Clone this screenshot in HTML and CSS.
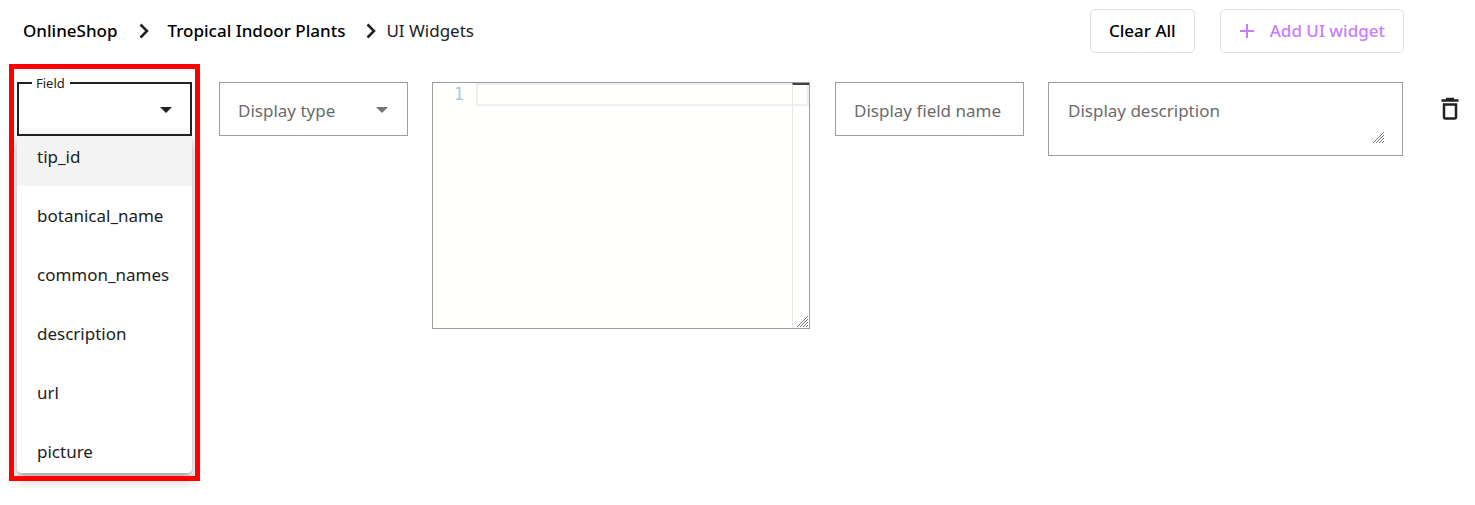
FILE: index.html
```
<!DOCTYPE html>
<html lang="en">
<head>
  <meta charset="UTF-8">
  <title>UI Widgets</title>
  <meta name="viewport" content="width=device-width, initial-scale=1.0">
  <link rel="stylesheet" href="styles.css">
</head>
<body>

  <header class="toolbar">
    <nav class="breadcrumb" aria-label="Breadcrumb">
      <a href="#shop">OnlineShop</a>
      <svg class="chevron" viewBox="0 0 10 16"><path d="M1.5 1.5 8 8l-6.5 6.5"/></svg>
      <a href="#plants">Tropical Indoor Plants</a>
      <svg class="chevron last" viewBox="0 0 10 16"><path d="M1.5 1.5 8 8l-6.5 6.5"/></svg>
      <span>UI Widgets</span>
    </nav>
    <div class="buttons">
      <button type="button" class="btn">Clear All</button>
      <button type="button" class="btn btn-add">
        <svg class="plus" viewBox="0 0 16 16"><path d="M8 1v14M1 8h14"/></svg>
        Add UI widget
      </button>
    </div>
  </header>

  <form class="widget-row">
    <div class="field-cell">
      <div class="select-box active">
        <label for="field">Field</label>
        <select id="field"><option value=""></option></select>
        <svg class="arrow" viewBox="0 0 12 6"><path d="M0 0h12L6 6z"/></svg>
      </div>
      <div class="menu" role="listbox" aria-label="Field">
        <button type="button" class="option selected" role="option" aria-selected="true">tip_id</button>
        <button type="button" class="option" role="option">botanical_name</button>
        <button type="button" class="option" role="option">common_names</button>
        <button type="button" class="option" role="option">description</button>
        <button type="button" class="option" role="option">url</button>
        <button type="button" class="option" role="option">picture</button>
      </div>
      <div class="highlight"></div>
    </div>

    <div class="select-box">
      <select id="type" aria-label="Display type"><option>Display type</option></select>
      <svg class="arrow" viewBox="0 0 12 6"><path d="M0 0h12L6 6z"/></svg>
    </div>

    <div class="editor">
      <div class="gutter">1</div>
      <textarea class="code" rows="1" aria-label="Widget parameters" spellcheck="false"></textarea>
      <div class="ruler"></div>
      <svg class="grip" viewBox="0 0 11 11"><path d="M0 11 11 0M3 11l8-8M6 11l5-5M9 11l2-2"/></svg>
    </div>

    <input class="text-box" type="text" aria-label="Display field name" placeholder="Display field name">

    <div class="area-box">
      <textarea rows="2" aria-label="Display description" placeholder="Display description"></textarea>
      <svg class="grip" viewBox="0 0 11 11"><path d="M0 11 11 0M3 11l8-8M6 11l5-5M9 11l2-2"/></svg>
    </div>

    <button type="button" class="delete" aria-label="Delete widget">
      <svg viewBox="0 0 18 24"><path d="M.5 3.5h17M5 2h8"/><path d="M3 7.500h12V20a1.500 1.500 0 0 1-1.500 1.500h-9A1.500 1.500 0 0 1 3 20z"/></svg>
    </button>
  </form>

</body>
</html>
```
FILE: styles.css
```
* {
  box-sizing: border-box;
}
body {
  margin: 0;
  font-family: "Noto Sans", sans-serif;
  font-size: 17px;
  line-height: 24px;
  color: #212121;
  background: #fff;
}
button, input, select, textarea {
  font: inherit;
  color: inherit;
}

.toolbar {
  display: flex;
  justify-content: space-between;
  align-items: center;
  padding: 9px 71px 0 23px;
}
.breadcrumb {
  display: flex;
  align-items: center;
}
.breadcrumb a {
  color: #000;
  font-weight: 500;
  text-decoration: none;
}
.chevron {
  width: 10px;
  height: 16px;
  margin: 0 19px 0 21px;
  fill: none;
  stroke: #212121;
  stroke-width: 2.5;
}
.chevron.last {
  margin-right: 10px;
}
.buttons {
  display: flex;
  gap: 25px;
}
.btn {
  display: flex;
  align-items: center;
  height: 44px;
  padding: 0 18px;
  color: #000;
  font-weight: 500;
  background: #fff;
  border: 1px solid #e0e0e0;
  border-radius: 5px;
}
.btn-add {
  gap: 15px;
  color: #c77dff;
}
.plus {
  width: 16px;
  height: 16px;
  stroke: #c77dff;
  stroke-width: 2;
}

.widget-row {
  display: grid;
  grid-template-columns: 178fr 189fr 379fr 189fr 355fr 46px;
  gap: 24px;
  align-items: start;
  padding: 29px 2px 32px 17px;
}
.field-cell {
  position: relative;
  margin-right: 3px;
}
.select-box {
  position: relative;
  height: 54px;
  border: 1px solid #9e9e9e;
}
.select-box select {
  width: 100%;
  height: 100%;
  padding: 4px 18px 0;
  color: #6b6b6b;
  background: none;
  border: 0;
  outline: 0;
  appearance: none;
}
.select-box.active {
  border: 2px solid #212121;
}
.select-box label {
  position: absolute;
  top: -11px;
  left: 13px;
  padding: 0 5px 0 4px;
  font-size: 13px;
  line-height: 20px;
  background: #fff;
}
.arrow {
  position: absolute;
  top: 24px;
  right: 19px;
  width: 12px;
  height: 6px;
  fill: #757575;
}
.active .arrow {
  right: 18px;
  top: 23px;
  fill: #212121;
}

.menu {
  height: 337px;
  overflow: hidden;
  background: #fff;
  border-radius: 0 0 5px 5px;
  box-shadow: 0 5px 5px -3px rgba(0, 0, 0, 0.2), 0 8px 10px 1px rgba(0, 0, 0, 0.14), 0 3px 14px 2px rgba(0, 0, 0, 0.12);
}
.option {
  display: block;
  width: 100%;
  height: 59px;
  padding: 0 20px;
  text-align: left;
  background: #fff;
  border: 0;
}
/* list is scrolled a little, the first option sits under the field */
.option.selected {
  margin-top: -9px;
  background: #f4f4f4;
}
.highlight {
  position: absolute;
  inset: -18px -8px -8px -8px;
  border: 5px solid #f00;
  pointer-events: none;
}

.editor {
  position: relative;
  display: flex;
  align-items: flex-start;
  height: 247px;
  margin-right: 1px;
  background: #fffffe;
  border: 1px solid #9e9e9e;
}
.gutter {
  width: 43px;
  padding-right: 12px;
  font-family: "DejaVu Sans Mono", monospace;
  line-height: 22px;
  text-align: right;
  color: #a9cdd6;
}
.code {
  flex: 1;
  min-width: 0;
  height: 23px;
  padding: 0;
  background: none;
  border: 2px solid #eee;
  outline: 0;
  resize: none;
  overflow: hidden;
}
.ruler {
  position: absolute;
  top: 0;
  right: 0;
  bottom: 0;
  width: 17px;
  border-top: 2px solid #424242;
  border-left: 1px solid #e8e8e8;
}
.grip {
  position: absolute;
  right: 1px;
  bottom: 1px;
  width: 11px;
  height: 11px;
  stroke: #777;
  stroke-width: 1;
}

.text-box {
  width: 100%;
  height: 54px;
  padding: 2px 18px 0;
  border: 1px solid #9e9e9e;
}
.area-box {
  position: relative;
  height: 74px;
  padding: 16px 19px 10px;
  border: 1px solid #9e9e9e;
}
.area-box textarea {
  display: block;
  width: 100%;
  height: 100%;
  padding: 0;
  border: 0;
  outline: 0;
  resize: none;
  overflow: hidden;
}
.area-box .grip {
  right: 18px;
  bottom: 12px;
}
::placeholder {
  color: #6b6b6b;
}
.delete {
  display: flex;
  justify-content: center;
  padding: 15px 0;
  background: none;
  border: 0;
}
.delete svg {
  width: 18px;
  height: 24px;
  fill: none;
  stroke: #212121;
  stroke-width: 2.5;
}
```
